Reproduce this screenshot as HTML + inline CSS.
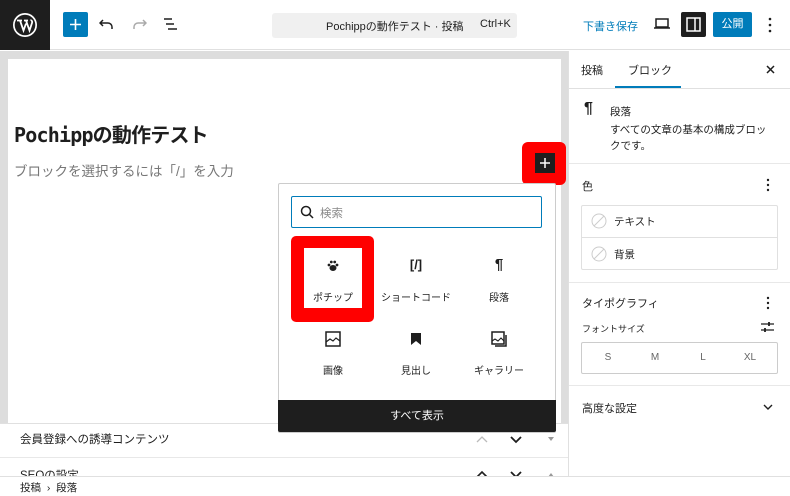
<!DOCTYPE html>
<html><head><meta charset="utf-8"><style>
*{box-sizing:border-box;margin:0;padding:0}
body{width:790px;height:496px;overflow:hidden;position:relative;background:#fff;font-family:"Liberation Sans","Noto Sans CJK JP",sans-serif;color:#1e1e1e;font-size:11px}
.a{position:absolute}
</style></head><body>
<!-- top bar -->
<div class="a" style="left:0;top:0;width:790px;height:50px;background:#fff;border-bottom:1px solid #e0e0e0"></div>
<div class="a" style="left:0;top:0;width:50px;height:50px;background:#1e1e1e"></div>
<svg class="a" style="left:12px;top:12px" width="26" height="26" viewBox="0 0 26 26"><circle cx="13" cy="13" r="12" fill="#fff"/><circle cx="13" cy="13" r="10.3" fill="#1e1e1e"/><path d="M5 8.5h5M8 8.5l3.5 10 2.5-7M12 8.5h4M14 8.5l3.5 10 2.5-7.5c.7-2-1-3-1.5-2.5" stroke="#fff" stroke-width="1.8" fill="none"/></svg>
<div class="a" style="left:63px;top:12px;width:25px;height:25px;background:#007cba;border-radius:2px"></div>
<svg class="a" style="left:63px;top:12px" width="25" height="25"><path d="M12.5 7v11M7 12.5h11" stroke="#fff" stroke-width="1.6"/></svg>
<svg class="a" style="left:99px;top:17px" width="16" height="14"><path d="M4 3L1 6l3 3M1 6h8a4 4 0 0 1 4 4v2" stroke="#1e1e1e" stroke-width="1.5" fill="none"/></svg>
<svg class="a" style="left:131px;top:17px" width="16" height="14"><path d="M12 3l3 3-3 3M15 6H7a4 4 0 0 0-4 4v2" stroke="#aaa" stroke-width="1.5" fill="none"/></svg>
<svg class="a" style="left:163px;top:17px" width="16" height="14"><path d="M1 2h8M3 7h8M5 12h9" stroke="#1e1e1e" stroke-width="1.5"/></svg>
<div class="a" style="left:272px;top:13px;width:245px;height:25px;background:#f0f0f0;border-radius:3px"></div>
<div class="a" style="left:326px;top:18px;font-size:11px">Pochippの動作テスト · 投稿</div>
<div class="a" style="left:480px;top:18px;font-size:11px">Ctrl+K</div>
<div class="a" style="left:583px;top:18px;font-size:11px;color:#007cba">下書き保存</div>
<svg class="a" style="left:653px;top:17px" width="18" height="14"><rect x="3" y="2" width="12" height="8" stroke="#1e1e1e" stroke-width="1.5" fill="none"/><path d="M1 11h16" stroke="#1e1e1e" stroke-width="1.5"/></svg>
<div class="a" style="left:681px;top:12px;width:25px;height:25px;background:#1e1e1e;border-radius:2px"></div>
<svg class="a" style="left:686px;top:17px" width="15" height="15"><rect x="1" y="1" width="13" height="13" stroke="#fff" stroke-width="1.5" fill="none"/><path d="M9 1v13" stroke="#fff" stroke-width="1.5"/></svg>
<div class="a" style="left:713px;top:12px;width:39px;height:25px;background:#007cba;border-radius:2px;color:#fff;font-size:11px;line-height:25px;text-align:center">公開</div>
<svg class="a" style="left:768px;top:17px" width="4" height="16"><circle cx="2" cy="2" r="1.3" fill="#1e1e1e"/><circle cx="2" cy="8" r="1.3" fill="#1e1e1e"/><circle cx="2" cy="14" r="1.3" fill="#1e1e1e"/></svg>
<!-- editor -->
<div class="a" style="left:0;top:51px;width:569px;height:426px;background:#ddd"></div>
<div class="a" style="left:8px;top:59px;width:553px;height:364px;background:#fff"></div>
<div class="a" style="left:14px;top:119px;font-size:20px;font-weight:bold;font-family:'DejaVu Sans Mono','Noto Sans CJK JP',monospace;letter-spacing:-0.8px">Pochippの動作テスト</div>
<div class="a" style="left:14px;top:160px;font-size:13.5px;color:#777">ブロックを選択するには「/」を入力</div>
<div class="a" style="left:522px;top:142px;width:44px;height:43px;background:#f00;border-radius:6px"></div>
<div class="a" style="left:535px;top:153px;width:20px;height:20px;background:#1e1e1e"></div>
<svg class="a" style="left:535px;top:153px" width="20" height="20"><path d="M10 5v10M5 10h10" stroke="#fff" stroke-width="1.5"/></svg>
<!-- meta boxes -->
<div class="a" style="left:0;top:423px;width:569px;height:54px;background:#fff;border-top:1px solid #e0e0e0"></div>
<div class="a" style="left:0;top:457px;width:569px;border-top:1px solid #e8e8e8"></div>
<div class="a" style="left:20px;top:431px;font-size:11.5px">会員登録への誘導コンテンツ</div>
<div class="a" style="left:20px;top:467px;font-size:11.5px">SEOの設定</div>
<svg class="a" style="left:476px;top:434px" width="84" height="10"><path d="M1 8l5-5 5 5" stroke="#bbb" stroke-width="1.3" fill="none"/><path d="M35 3l5 5 5-5" stroke="#1e1e1e" stroke-width="1.8" fill="none"/><path d="M72 3h6l-3 4z" fill="#999"/></svg>
<svg class="a" style="left:476px;top:470px" width="84" height="8"><path d="M1 7l5-5 5 5" stroke="#1e1e1e" stroke-width="1.6" fill="none"/><path d="M35 2l5 5 5-5" stroke="#1e1e1e" stroke-width="1.8" fill="none"/><path d="M72 7h6l-3-4z" fill="#999"/></svg>
<!-- inserter -->
<div class="a" style="left:278px;top:183px;width:278px;height:250px;background:#fff;border:1px solid #ccc;border-radius:2px"></div>
<div class="a" style="left:291px;top:196px;width:251px;height:32px;border:1px solid #007cba;border-radius:2px"></div>
<svg class="a" style="left:300px;top:205px" width="14" height="14"><circle cx="6" cy="6" r="4.5" stroke="#1e1e1e" stroke-width="1.5" fill="none"/><path d="M9.5 9.5l3.5 3.5" stroke="#1e1e1e" stroke-width="1.5"/></svg>
<div class="a" style="left:320px;top:205px;font-size:11.5px;color:#888">検索</div>
<div class="a" style="left:291px;top:236px;width:83px;height:86px;background:#f00;border-radius:5px"></div>
<div class="a" style="left:304px;top:248px;width:58px;height:60px;background:#fff"></div>
<svg class="a" style="left:327px;top:260px" width="12" height="12"><ellipse cx="6" cy="8" rx="3.5" ry="3" fill="#1e1e1e"/><circle cx="2" cy="5" r="1.4" fill="#1e1e1e"/><circle cx="10" cy="5" r="1.4" fill="#1e1e1e"/><circle cx="4.3" cy="2" r="1.4" fill="#1e1e1e"/><circle cx="7.7" cy="2" r="1.4" fill="#1e1e1e"/></svg>
<div class="a" style="left:304px;top:289px;width:58px;text-align:center;font-size:10px">ポチップ</div>
<div class="a" style="left:386px;top:257px;width:60px;text-align:center;font-size:13px;font-weight:bold">[/]</div>
<div class="a" style="left:376px;top:289px;width:80px;text-align:center;font-size:10px">ショートコード</div>
<div class="a" style="left:469px;top:256px;width:60px;text-align:center;font-size:15px;font-weight:bold">¶</div>
<div class="a" style="left:469px;top:289px;width:60px;text-align:center;font-size:10px">段落</div>
<svg class="a" style="left:325px;top:331px" width="16" height="16"><rect x="1" y="1" width="14" height="14" stroke="#1e1e1e" stroke-width="1.5" fill="none"/><path d="M1 11l4-3 3 2 3-3 4 3" stroke="#1e1e1e" stroke-width="1.2" fill="none"/></svg>
<div class="a" style="left:304px;top:362px;width:58px;text-align:center;font-size:10px">画像</div>
<svg class="a" style="left:410px;top:332px" width="12" height="14"><path d="M1 1h10v12l-5-4-5 4z" fill="#1e1e1e"/></svg>
<div class="a" style="left:386px;top:362px;width:60px;text-align:center;font-size:10px">見出し</div>
<svg class="a" style="left:491px;top:331px" width="17" height="17"><rect x="1" y="1" width="12" height="12" stroke="#1e1e1e" stroke-width="1.5" fill="none"/><path d="M1 10l3-2 3 2 3-3 3 3" stroke="#1e1e1e" stroke-width="1.1" fill="none"/><path d="M15 4v11H4" stroke="#1e1e1e" stroke-width="1.5" fill="none"/></svg>
<div class="a" style="left:469px;top:362px;width:60px;text-align:center;font-size:10px">ギャラリー</div>
<div class="a" style="left:278px;top:400px;width:278px;height:32px;background:#1e1e1e;border-radius:0 0 2px 2px;color:#fff;font-size:11px;line-height:32px;text-align:center">すべて表示</div>
<!-- footer -->
<div class="a" style="left:0;top:476px;width:790px;height:20px;background:#fff;border-top:1px solid #e0e0e0"></div>
<div class="a" style="left:20px;top:480px;font-size:10.5px">投稿 &nbsp;›&nbsp; 段落</div>
<!-- sidebar -->
<div class="a" style="left:568px;top:51px;width:1px;height:426px;background:#e0e0e0"></div>
<div class="a" style="left:581px;top:62px;font-size:11px">投稿</div>
<div class="a" style="left:628px;top:62px;font-size:11px">ブロック</div>
<div class="a" style="left:615px;top:86px;width:66px;height:2px;background:#007cba"></div>
<div class="a" style="left:569px;top:88px;width:221px;border-top:1px solid #e0e0e0"></div>
<svg class="a" style="left:766px;top:65px" width="9" height="9"><path d="M1 1l7 7M8 1L1 8" stroke="#1e1e1e" stroke-width="1.5"/></svg>
<div class="a" style="left:584px;top:100px;font-size:16px;font-weight:bold">¶</div>
<div class="a" style="left:610px;top:104px;font-size:10.5px">段落</div>
<div class="a" style="left:610px;top:122px;font-size:10.5px;line-height:16px;width:160px">すべての文章の基本の構成ブロックです。</div>
<div class="a" style="left:569px;top:163px;width:221px;border-top:1px solid #e8e8e8"></div>
<div class="a" style="left:582px;top:178px;font-size:11px">色</div>
<svg class="a" style="left:766px;top:178px" width="4" height="14"><circle cx="2" cy="2" r="1.2" fill="#1e1e1e"/><circle cx="2" cy="7" r="1.2" fill="#1e1e1e"/><circle cx="2" cy="12" r="1.2" fill="#1e1e1e"/></svg>
<div class="a" style="left:581px;top:205px;width:197px;height:65px;border:1px solid #e0e0e0;border-radius:2px"></div>
<div class="a" style="left:582px;top:237px;width:195px;border-top:1px solid #e0e0e0"></div>
<svg class="a" style="left:591px;top:213px" width="16" height="50"><circle cx="8" cy="8" r="7" stroke="#ccc" fill="none"/><path d="M3 13L13 3" stroke="#ccc"/><circle cx="8" cy="41" r="7" stroke="#ccc" fill="none"/><path d="M3 46L13 36" stroke="#ccc"/></svg>
<div class="a" style="left:614px;top:214px;font-size:10.5px">テキスト</div>
<div class="a" style="left:614px;top:247px;font-size:10.5px">背景</div>
<div class="a" style="left:569px;top:282px;width:221px;border-top:1px solid #e8e8e8"></div>
<div class="a" style="left:582px;top:295px;font-size:11px">タイポグラフィ</div>
<svg class="a" style="left:766px;top:296px" width="4" height="14"><circle cx="2" cy="2" r="1.2" fill="#1e1e1e"/><circle cx="2" cy="7" r="1.2" fill="#1e1e1e"/><circle cx="2" cy="12" r="1.2" fill="#1e1e1e"/></svg>
<div class="a" style="left:582px;top:322px;font-size:9px">フォントサイズ</div>
<svg class="a" style="left:761px;top:321px" width="13" height="12"><path d="M0 3h13M0 9h13" stroke="#1e1e1e" stroke-width="1.3"/><path d="M8 1v4M4 7v4" stroke="#1e1e1e" stroke-width="1.8"/></svg>
<div class="a" style="left:581px;top:342px;width:197px;height:32px;border:1px solid #ccc;border-radius:2px"></div>
<div class="a" style="left:600px;top:352px;width:16px;text-align:center;font-size:10px;color:#666">S</div>
<div class="a" style="left:647px;top:352px;width:16px;text-align:center;font-size:10px;color:#666">M</div>
<div class="a" style="left:695px;top:352px;width:16px;text-align:center;font-size:10px;color:#666">L</div>
<div class="a" style="left:742px;top:352px;width:16px;text-align:center;font-size:10px;color:#666">XL</div>
<div class="a" style="left:569px;top:385px;width:221px;border-top:1px solid #e8e8e8"></div>
<div class="a" style="left:582px;top:400px;font-size:11px">高度な設定</div>
<svg class="a" style="left:763px;top:404px" width="10" height="7"><path d="M1 1l4 4 4-4" stroke="#1e1e1e" stroke-width="1.4" fill="none"/></svg>
</body></html>
